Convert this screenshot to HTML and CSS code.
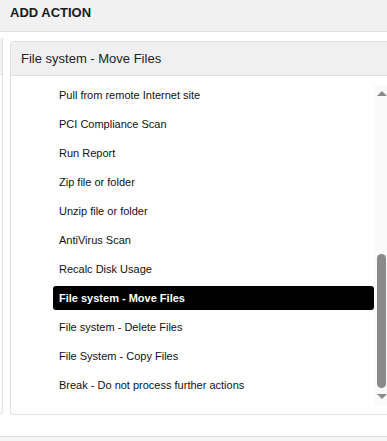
FILE: index.html
```html
<!DOCTYPE html>
<html lang="en">
    <head>
        <meta charset="UTF-8">
        <meta name="viewport" content="width=device-width, initial-scale=1.0">
        <title>Add Action</title>
        <link rel="stylesheet" href="styles.css">
    </head>
    <body>
        <div class="top-bar">ADD ACTION</div>

        <div class="content">
            <div class="side-panel">
                <div class="side-head"></div>
            </div>

            <div class="action-panel">
                <div class="panel-head">File system - Move Files</div>
                <div class="panel-body">
                    <ul class="action-list">
                        <li>Pull from remote Internet site</li>
                        <li>PCI Compliance Scan</li>
                        <li>Run Report</li>
                        <li>Zip file or folder</li>
                        <li>Unzip file or folder</li>
                        <li>AntiVirus Scan</li>
                        <li>Recalc Disk Usage</li>
                        <li class="selected">File system - Move Files</li>
                        <li>File system - Delete Files</li>
                        <li>File System - Copy Files</li>
                        <li>Break - Do not process further actions</li>
                    </ul>
                    <!-- fake scrollbar, thumb sits near the bottom -->
                    <div class="scrollbar">
                        <span class="arrow-up"></span>
                        <span class="thumb"></span>
                        <span class="arrow-down"></span>
                    </div>
                </div>
            </div>
        </div>

        <div class="footer-bar"></div>
    </body>
</html>
```

FILE: styles.css
```css
/* Reset default styles */
* {
  margin: 0;
  padding: 0;
  box-sizing: border-box;
}

body {
  font-family: 'Liberation Sans', Arial, sans-serif;
  background-color: #ffffff;
  color: #222222;
  overflow: hidden;
  width: 387px;
  height: 441px;
}

.top-bar {
  height: 32px;
  padding-left: 10px;
  background-color: #f1f1f1;
  border-bottom: 1px solid #dddddd;
  font-size: 13px;
  font-weight: bold;
  line-height: 25px;
  color: #1a1a1a;
}

.content {
  display: flex;
  padding-top: 9px;
}

/* edge of the panel sitting to the left */
.side-panel {
  width: 3px;
  height: 376px;
  margin-top: -3px;
  border-right: 1px solid #e2e2e2;
  border-bottom: 1px solid #e2e2e2;
  border-bottom-right-radius: 3px;
}

.side-head {
  height: 37px;
  background-color: #f3f3f3;
  border-bottom: 1px solid #e2e2e2;
}

.action-panel {
  flex: 1;
  margin-left: 7px;
  border: 1px solid #dddddd;
  border-right: none;
  border-radius: 4px 0 0 4px;
}

.panel-head {
  height: 34px;
  padding-left: 10px;
  background-color: #f0f0f0;
  border-bottom: 1px solid #dddddd;
  border-top-left-radius: 4px;
  font-size: 13px;
  line-height: 33px;
  color: #222222;
}

.panel-body {
  display: flex;
  height: 338px;
}

.action-list {
  flex: 1;
  list-style: none;
  display: flex;
  flex-direction: column;
  gap: 5px;
  padding: 7px 0 0 42px;
  overflow: hidden;
}

.action-list li {
  flex-shrink: 0;
  height: 24px;
  line-height: 24px;
  padding-left: 6px;
  font-size: 11px;
  color: #111111;
  border-radius: 3px;
  white-space: nowrap;
}

.action-list li.selected {
  background-color: #000000;
  color: #ffffff;
  font-weight: bold;
}

.scrollbar {
  width: 13px;
  margin: 9px 0;
  padding: 6px 0 6px 2px;
  background-color: #fafafa;
  display: flex;
  flex-direction: column;
  align-items: center;
}

.arrow-up {
  width: 0;
  height: 0;
  border-left: 5px solid transparent;
  border-right: 5px solid transparent;
  border-bottom: 5px solid #8a8a8a;
}

.thumb {
  width: 9px;
  height: 134px;
  margin-top: auto;
  background-color: #8a8a8a;
  border-radius: 5px;
}

.arrow-down {
  width: 0;
  height: 0;
  margin-top: 6px;
  border-left: 5px solid transparent;
  border-right: 5px solid transparent;
  border-top: 5px solid #8a8a8a;
}

.footer-bar {
  margin-top: 21px;
  height: 20px;
  background-color: #f5f5f5;
  border-top: 1px solid #dddddd;
}
```
